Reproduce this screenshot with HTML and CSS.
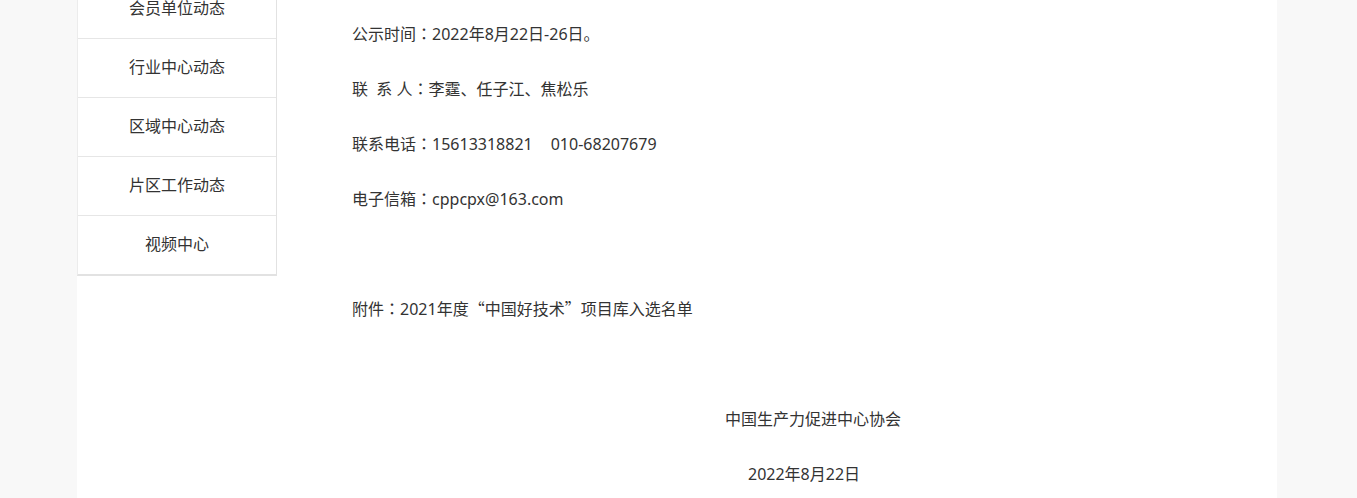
FILE: index.html
```html
<!DOCTYPE html>
<html lang="zh-CN">
<head>
<meta charset="UTF-8">
<title>公示</title>
<link rel="stylesheet" href="styles.css">
</head>
<body>
<div class="page">
	<div class="sidebar">
		<a class="navitem" href="#">会员单位动态</a>
		<a class="navitem" href="#">行业中心动态</a>
		<a class="navitem" href="#">区域中心动态</a>
		<a class="navitem" href="#">片区工作动态</a>
		<a class="navitem" href="#">视频中心</a>
	</div>
	<div class="article">
		<p>公示时间<span class="cjk" lang="zh-TW">：</span>2022年8月22日-26日。</p>
		<p>联&nbsp;&nbsp;系&nbsp;人<span class="cjk" lang="zh-TW">：</span>李霆、任子江、焦松乐</p>
		<p>联系电话<span class="cjk" lang="zh-TW">：</span>15613318821<span class="gap"></span>010-68207679</p>
		<p>电子信箱<span class="cjk" lang="zh-TW">：</span>cppcpx@163.com</p>
		<p>&nbsp;</p>
		<p>附件<span class="cjk" lang="zh-TW">：</span>2021年度<span class="quote">“</span>中国好技术<span class="quote">”</span>项目库入选名单</p>
		<p>&nbsp;</p>
		<p class="sign org">中国生产力促进中心协会</p>
		<p class="sign date">2022年8月22日</p>
	</div>
</div>
</body>
</html>
```

FILE: styles.css
```css
html, body {
	margin: 0;
	padding: 0;
}
body {
	background-color: #f8f8f8;
	color: #333;
	font-family: "Noto Sans", "Noto Sans CJK SC", sans-serif;
	font-size: 16px;
	overflow: hidden;
}

.page {
	width: 1200px;
	margin: -20px 0 0 77px;
	background-color: #fff;
	display: flex;
	align-items: flex-start;
	min-height: 560px;
}

.sidebar {
	width: 198px;
	border-left: 1px solid #ececec;
	border-right: 1px solid #e2e2e2;
	border-bottom: 2px solid #e2e2e2;
	display: flex;
	flex-direction: column;
}
.navitem {
	display: block;
	height: 58px;
	line-height: 56px;
	text-align: center;
	color: #333;
	text-decoration: none;
	border-bottom: 1px solid #e6e6e6;
}
.navitem:last-child {
	border-bottom: none;
}

.article {
	flex: 1;
	padding: 27px 0 0 75px;
}
.article p {
	margin: 0;
	line-height: 55px;
}
/* full-width punctuation, centred like the original face */
.article .cjk {
	font-family: "Noto Sans CJK TC", sans-serif;
	line-height: 20px;
}
.article .quote {
	font-family: "Noto Sans CJK SC", sans-serif;
	line-height: 20px;
}
.article .gap {
	display: inline-block;
	width: 18px;
}
.article .org {
	padding-left: 373px;
}
.article .date {
	padding-left: 396px;
}
```
